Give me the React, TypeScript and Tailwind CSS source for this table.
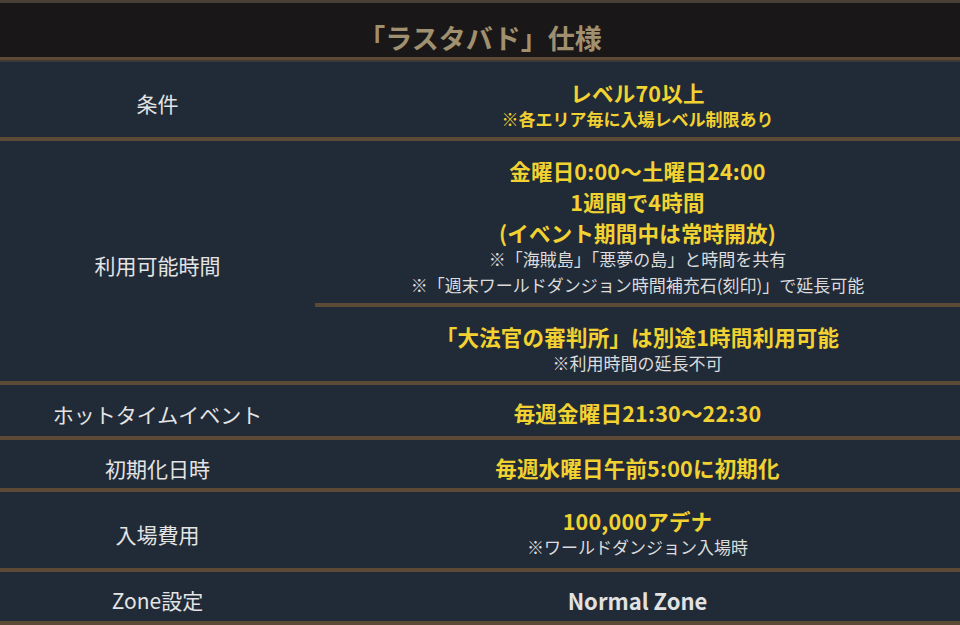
const font = { fontFamily: '"Noto Sans CJK JP", "Noto Sans", sans-serif' };

function Big({ children }: { children: React.ReactNode }) {
  return <div className="text-[21.5px] leading-[31px] font-bold text-[#f2d230] tracking-[0.2px]">{children}</div>;
}

function Note({ children, bold, first }: { children: React.ReactNode; bold?: boolean; first?: boolean }) {
  return (
    <div
      className={
        'text-[17px] leading-[26px] ' +
        (bold ? 'font-bold text-[#f2d230] ' : 'text-[#dcdcdc] ') +
        (first ? '-mt-[2px]' : '')
      }
    >
      {children}
    </div>
  );
}

function Row({
  label,
  h,
  pt,
  children,
}: {
  label: string;
  h: string;
  pt: string;
  children: React.ReactNode;
}) {
  return (
    <>
      <div className={`flex ${h}`}>
        <div className="w-[315px] shrink-0 flex items-center justify-center pt-[9px] text-[21px] text-[#e4e4e4]">
          {label}
        </div>
        <div className={`flex-1 flex flex-col items-center text-center ${pt}`}>{children}</div>
      </div>
      <div className="h-[4px] bg-[#5c4a36]" />
    </>
  );
}

export default function App() {
  return (
    <div className="w-[960px] h-[625px] overflow-hidden bg-[#212b38]" style={font}>
      <div className="h-[3px] bg-[#4a4036]" />
      <div className="h-[54px] bg-[#191717] flex justify-center pt-[17px]">
        <h2 className="text-[27px] leading-[36px] font-bold text-[#a0906f]">「ラスタバド」仕様</h2>
      </div>
      <div className="h-[3px] bg-[#5c4a36]" />
      <div className="h-[2px] bg-[#3e3a36]" />

      <Row label="条件" h="h-[75px]" pt="pt-[15px]">
        <Big>レベル70以上</Big>
        <Note bold first>
          ※各エリア毎に入場レベル制限あり
        </Note>
      </Row>

      <div className="flex h-[240px]">
        <div className="w-[315px] shrink-0 flex items-center justify-center pt-[9px] text-[21px] text-[#e4e4e4]">
          利用可能時間
        </div>
        <div className="flex-1 flex flex-col">
          <div className="h-[162px] flex flex-col items-center text-center pt-[14px]">
            <Big>金曜日0:00～土曜日24:00</Big>
            <Big>1週間で4時間</Big>
            <Big>(イベント期間中は常時開放)</Big>
            <Note first>※「海賊島」「悪夢の島」と時間を共有</Note>
            <Note>※「週末ワールドダンジョン時間補充石(刻印)」で延長可能</Note>
          </div>
          <div className="h-[4px] bg-[#5c4a36]" />
          <div className="flex-1 flex flex-col items-center text-center pt-[14px]">
            <Big>「大法官の審判所」は別途1時間利用可能</Big>
            <Note first>※利用時間の延長不可</Note>
          </div>
        </div>
      </div>
      <div className="h-[4px] bg-[#5c4a36]" />

      <Row label="ホットタイムイベント" h="h-[51px]" pt="pt-[12px]">
        <Big>毎週金曜日21:30～22:30</Big>
      </Row>

      <Row label="初期化日時" h="h-[48px]" pt="pt-[12px]">
        <Big>毎週水曜日午前5:00に初期化</Big>
      </Row>

      <Row label="入場費用" h="h-[76px]" pt="pt-[13px]">
        <Big>100,000アデナ</Big>
        <Note first>※ワールドダンジョン入場時</Note>
      </Row>

      <Row label="Zone設定" h="h-[49px]" pt="pt-[13px]">
        <div className="text-[22px] leading-[31px] font-bold text-[#e2e2e2]">Normal Zone</div>
      </Row>
    </div>
  );
}
